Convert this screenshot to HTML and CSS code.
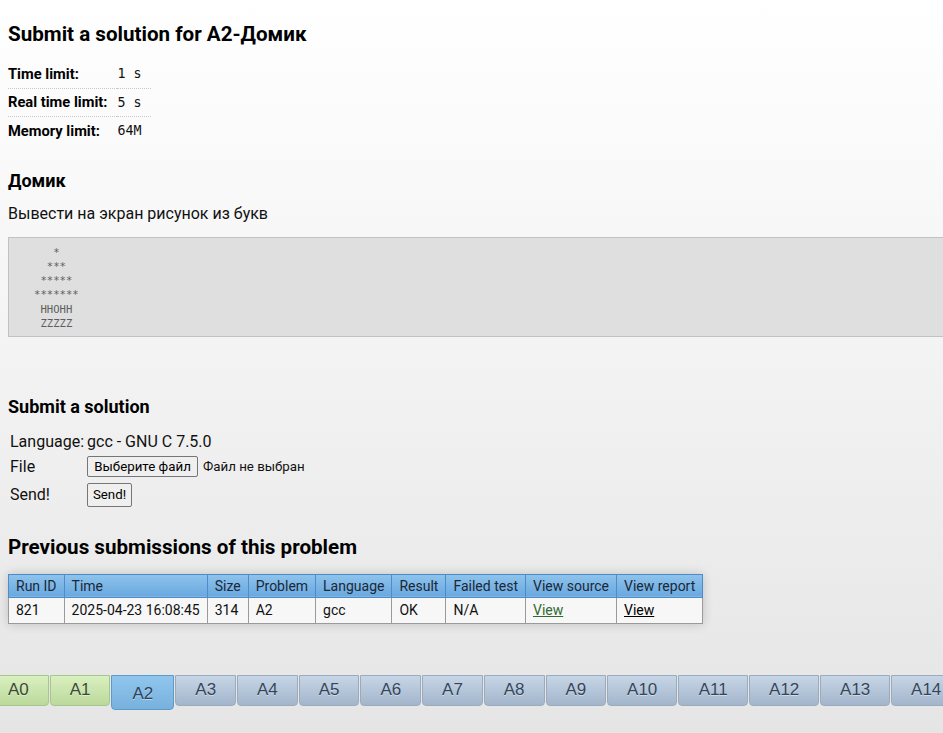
FILE: index.html
```html
<!DOCTYPE html>
<html>
<head>
<meta charset="utf-8">
<title>Submit a solution</title>
<link rel="stylesheet" href="styles.css">
</head>
<body>
<div class="page">
  <h1 class="title">Submit a solution for A2-Домик</h1>
  <table class="limits">
    <tr><th>Time limit:</th><td>1 s</td></tr>
    <tr><th>Real time limit:</th><td>5 s</td></tr>
    <tr><th>Memory limit:</th><td>64M</td></tr>
  </table>

  <h2 class="sub">Домик</h2>
  <p class="statement">Вывести на экран рисунок из букв</p>
  <pre class="sample">   *
  ***
 *****
*******
 HHOHH
 ZZZZZ</pre>

  <h2 class="sub submit-h">Submit a solution</h2>
  <table class="form">
    <tr class="r1"><td class="lbl">Language:</td><td>gcc - GNU C 7.5.0</td></tr>
    <tr class="r2"><td class="lbl">File</td><td><span class="btn file-btn">Выберите файл</span><span class="nofile">Файл не выбран</span></td></tr>
    <tr class="r3"><td class="lbl">Send!</td><td><span class="btn send-btn">Send!</span></td></tr>
  </table>

  <h1 class="title prev">Previous submissions of this problem</h1>
  <table class="subs">
    <thead>
      <tr><th>Run ID</th><th>Time</th><th>Size</th><th>Problem</th><th>Language</th><th>Result</th><th>Failed test</th><th>View source</th><th>View report</th></tr>
    </thead>
    <tbody>
      <tr><td>821</td><td>2025-04-23 16:08:45</td><td>314</td><td>A2</td><td>gcc</td><td>OK</td><td>N/A</td><td><a class="vsrc" href="#">View</a></td><td><a class="vrep" href="#">View</a></td></tr>
    </tbody>
  </table>
</div>
<div class="tabs">
  <div class="tab ok">A0</div>
  <div class="tab ok">A1</div>
  <div class="tab cur">A2</div>
  <div class="tab">A3</div>
  <div class="tab">A4</div>
  <div class="tab">A5</div>
  <div class="tab">A6</div>
  <div class="tab">A7</div>
  <div class="tab">A8</div>
  <div class="tab">A9</div>
  <div class="tab wide">A10</div>
  <div class="tab wide">A11</div>
  <div class="tab wide">A12</div>
  <div class="tab wide">A13</div>
  <div class="tab wide">A14</div>
</div>
</body>
</html>
```

FILE: styles.css
```css
html {
  height: 100%;
  overflow: hidden;
}
body {
  margin: 0;
  min-height: 733px;
  background: linear-gradient(to bottom, #ffffff 0%, #f4f4f4 45%, #e6e5e6 100%);
  font-family: Roboto, "Liberation Sans", sans-serif;
  color: #111;
  overflow: hidden;
}
.page {
  padding: 0 0 0 8px;
}
.title {
  font-size: 20.6px;
  line-height: 24px;
  font-weight: bold;
  margin: 22px 0 0 0;
  color: #000;
}
.limits {
  border-collapse: collapse;
  margin-top: 14px;
}
.limits th {
  text-align: left;
  font-size: 14.7px;
  font-weight: bold;
  padding: 0 10px 0 0;
  height: 27.5px;
  white-space: nowrap;
  color: #000;
}
.limits td {
  font-family: "DejaVu Sans Mono", monospace;
  font-size: 13.3px;
  padding: 0 10px 0 0;
  height: 27.5px;
  color: #111;
}
.limits tr + tr th,
.limits tr + tr td {
  border-top: 1px dotted #c8c8c8;
}
.sub {
  font-size: 18px;
  line-height: 22px;
  font-weight: bold;
  margin: 25px 0 0 0;
  color: #000;
}
.statement {
  font-size: 16px;
  line-height: 20px;
  margin: 12px 0 0 0;
}
.sample {
  margin: 13px -20px 0 0;
  padding: 7px 0 7px 25px;
  height: 84px;
  background: #dfdfdf;
  border: 1px solid #c2c2c2;
  font-family: "DejaVu Sans Mono", monospace;
  font-size: 10.6px;
  line-height: 14.3px;
  color: #5e5e5e;
}
.submit-h {
  margin-top: 59px;
}
.form {
  border-collapse: collapse;
  margin-top: 12px;
  font-size: 16px;
}
.form td {
  padding: 0 2px;
  white-space: nowrap;
}
.form td.lbl {
  padding-right: 1px;
}
.form .r1 td { height: 24px; }
.form .r2 td { height: 26px; }
.form .r3 td { height: 30px; }
.btn {
  display: inline-block;
  box-sizing: border-box;
  border: 1px solid #767676;
  border-radius: 2px;
  background: #efefef;
  font-size: 13.3px;
  color: #000;
  vertical-align: middle;
}
.file-btn {
  height: 21px;
  line-height: 19px;
  width: 111px;
  text-align: center;
}
.nofile {
  font-size: 13.3px;
  margin-left: 5px;
  vertical-align: middle;
}
.send-btn {
  height: 24px;
  line-height: 22px;
  width: 45px;
  text-align: center;
}
.prev {
  margin-top: 25px;
}
.subs {
  border-collapse: collapse;
  margin-top: 15px;
  font-size: 14px;
  box-shadow: 0 0 10px rgba(0, 0, 0, 0.18);
}
.subs th {
  background: linear-gradient(to bottom, #8ec3ec 0%, #6aa8df 100%);
  border: 1px solid #4f8bc9;
  color: #1a2838;
  font-weight: normal;
  text-align: left;
  height: 22px;
  padding: 0 7px;
  white-space: nowrap;
}
.subs td {
  background: #f7f7f7;
  border: 1px solid #9a9a9a;
  height: 25px;
  padding: 0 7px;
  white-space: nowrap;
}
.vsrc {
  color: #2f6b2f;
}
.vrep {
  color: #000;
}
.tabs {
  display: flex;
  align-items: flex-start;
  margin: 51px 0 0 -12px;
  gap: 1px;
}
.tab {
  flex: none;
  box-sizing: border-box;
  width: 60.7px;
  height: 31px;
  border: 1px solid #9babbd;
  border-radius: 0 0 4px 4px;
  background: linear-gradient(to bottom, #c6d6e7 0%, #a3b5cb 100%);
  font-family: "Liberation Sans", Arial, sans-serif;
  font-size: 17px;
  line-height: 28px;
  text-align: center;
  color: #34465a;
  text-shadow: 0 1px 0 rgba(255, 255, 255, 0.45);
}
.tab.wide {
  width: 70px;
}
.tab.ok {
  background: linear-gradient(to bottom, #d9f0bf 0%, #bcd99c 100%);
  border-color: #a9c58f;
  color: #3a4a34;
}
.tab.cur {
  width: 63px;
  height: 35px;
  line-height: 36px;
  background: linear-gradient(to bottom, #90c6ee 0%, #78b1dd 100%);
  border-color: #5b9bc8;
  color: #2c4258;
}
```
